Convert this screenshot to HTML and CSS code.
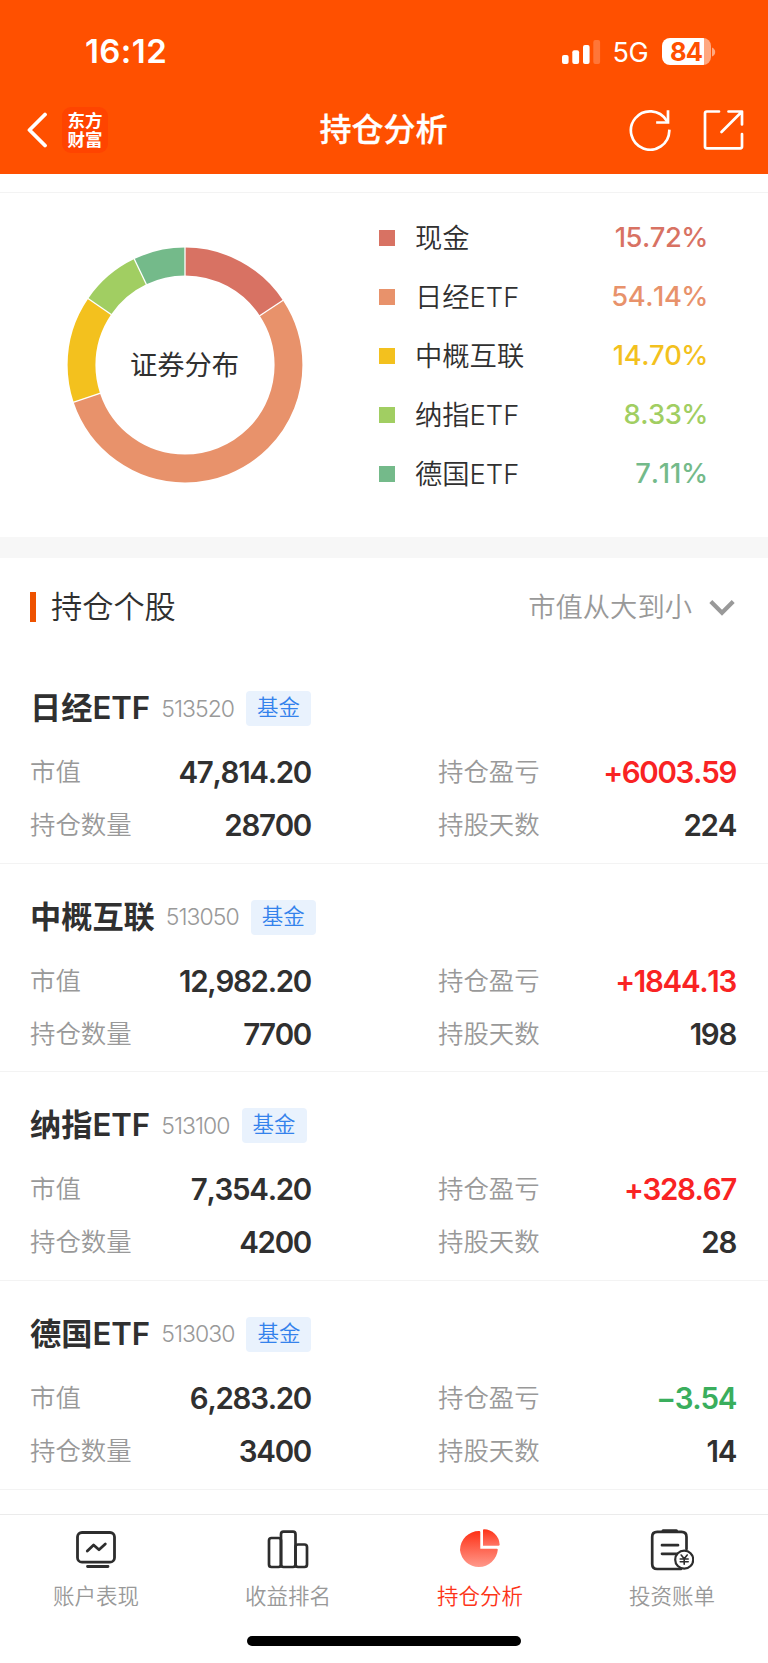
FILE: index.html
```html
<!DOCTYPE html>
<html lang="zh-CN">
<head>
<meta charset="utf-8">
<title>持仓分析</title>
<link rel="stylesheet" href="styles.css">
</head>
<body>
<div class="app">
  <header class="header">
    <div class="status">
      <span class="time">16:12</span>
      <div class="status-right">
        <svg class="signal" width="39" height="25" viewBox="0 0 39 25" fill="#fff">
          <rect x="0" y="15" width="6.6" height="9" rx="2"/>
          <rect x="10.3" y="10.3" width="6.8" height="13.7" rx="2"/>
          <rect x="21" y="5" width="6.6" height="19" rx="2"/>
          <rect x="31.3" y="0" width="6.8" height="24" rx="2" opacity=".22"/>
        </svg>
        <span class="network">5G</span>
        <div class="battery"><span class="battery-level">84</span></div>
        <svg class="battery-cap" width="4" height="10" viewBox="0 0 4 10"><path d="M0 0.5Q3.2 2 3.2 5T0 9.5Z" fill="#fff" opacity=".5"/></svg>
      </div>
    </div>
    <nav class="nav">
      <div class="nav-left">
        <svg width="22" height="36" viewBox="0 0 22 36" fill="none" stroke="#fff" stroke-width="3.8" stroke-linecap="round" stroke-linejoin="round"><path d="M19 2.500L3.500 18L19 33.500"/></svg>
        <div class="logo"><span>东方</span><span>财富</span></div>
      </div>
      <h1 class="nav-title">持仓分析</h1>
      <div class="nav-right">
        <svg width="42" height="42" viewBox="0 0 42 42" fill="none" stroke="#fff" stroke-width="2.700" stroke-linecap="square"><path d="M40.300 22A19.200 19.200 0 1 1 37.500 11.500"/><path d="M39 2.500V13.500H28.500"/></svg>
        <svg width="42" height="42" viewBox="0 0 42 42" fill="none" stroke="#fff" stroke-width="2.700" stroke-linecap="round" stroke-linejoin="round"><path d="M16 2.500H3.800Q2 2.500 2 4.300V37.500Q2 39.300 3.800 39.300H37.200Q39 39.300 39 37.500V25M25.500 2.500H39V15.500M38.500 3L18.500 23"/></svg>
      </div>
    </nav>
  </header>

  <section class="overview">
    <div class="chart">
      <svg width="236" height="236" viewBox="-118 -118 236 236">
        <g transform="rotate(-90)" fill="none" stroke-width="27.800">
          <circle r="103.500" stroke="#d87263" pathLength="100" stroke-dasharray="15.720 84.280" stroke-dashoffset="0"/>
          <circle r="103.500" stroke="#e8926b" pathLength="100" stroke-dasharray="54.140 45.860" stroke-dashoffset="-15.720"/>
          <circle r="103.500" stroke="#f3c11e" pathLength="100" stroke-dasharray="14.700 85.300" stroke-dashoffset="-69.860"/>
          <circle r="103.500" stroke="#a1ce62" pathLength="100" stroke-dasharray="8.330 91.670" stroke-dashoffset="-84.560"/>
          <circle r="103.500" stroke="#74ba8a" pathLength="100" stroke-dasharray="7.110 92.890" stroke-dashoffset="-92.890"/>
        </g>
        <g stroke="#fff" stroke-width="1.300">
          <path d="M0 -89V-118"/>
          <path d="M0 -89V-118" transform="rotate(56.590)"/>
          <path d="M0 -89V-118" transform="rotate(251.500)"/>
          <path d="M0 -89V-118" transform="rotate(304.420)"/>
          <path d="M0 -89V-118" transform="rotate(334.400)"/>
        </g>
      </svg>
      <span class="chart-label">证券分布</span>
    </div>
    <ul class="legend">
      <li class="cash"><i></i><span>现金</span><b>15.72%</b></li>
      <li class="nikkei"><i></i><span>日经ETF</span><b>54.14%</b></li>
      <li class="china"><i></i><span>中概互联</span><b>14.70%</b></li>
      <li class="nasdaq"><i></i><span>纳指ETF</span><b>8.33%</b></li>
      <li class="germany"><i></i><span>德国ETF</span><b>7.11%</b></li>
    </ul>
  </section>

  <section class="holdings">
    <div class="section-head">
      <h2><span>持仓个股</span></h2>
      <div class="sort"><span>市值从大到小</span>
        <svg width="26" height="18" viewBox="0 0 26 18" fill="none" stroke="#999" stroke-width="4.200"><path d="M1.800 2.500L13 13.700L24.200 2.500"/></svg>
      </div>
    </div>

    <article class="stock">
      <div class="stock-head"><h3>日经ETF</h3><span class="code">513520</span><span class="tag">基金</span></div>
      <dl><dt>市值</dt><dd>47,814.20</dd><dt>持仓盈亏</dt><dd class="up">+6003.59</dd>
      <dt>持仓数量</dt><dd>28700</dd><dt>持股天数</dt><dd>224</dd></dl>
    </article>
    <article class="stock">
      <div class="stock-head"><h3>中概互联</h3><span class="code">513050</span><span class="tag">基金</span></div>
      <dl><dt>市值</dt><dd>12,982.20</dd><dt>持仓盈亏</dt><dd class="up">+1844.13</dd>
      <dt>持仓数量</dt><dd>7700</dd><dt>持股天数</dt><dd>198</dd></dl>
    </article>
    <article class="stock">
      <div class="stock-head"><h3>纳指ETF</h3><span class="code">513100</span><span class="tag">基金</span></div>
      <dl><dt>市值</dt><dd>7,354.20</dd><dt>持仓盈亏</dt><dd class="up">+328.67</dd>
      <dt>持仓数量</dt><dd>4200</dd><dt>持股天数</dt><dd>28</dd></dl>
    </article>
    <article class="stock">
      <div class="stock-head"><h3>德国ETF</h3><span class="code">513030</span><span class="tag">基金</span></div>
      <dl><dt>市值</dt><dd>6,283.20</dd><dt>持仓盈亏</dt><dd class="down">−3.54</dd>
      <dt>持仓数量</dt><dd>3400</dd><dt>持股天数</dt><dd>14</dd></dl>
    </article>
  </section>

  <footer class="tabbar">
    <div class="tabs">
      <a class="tab">
        <svg width="44" height="44" viewBox="0 0 44 44" fill="none" stroke="#2d2d2d" stroke-width="2.800" stroke-linecap="round" stroke-linejoin="round"><rect x="3.500" y="4.500" width="37" height="29.700" rx="4.500"/><path d="M13.300 23L19.600 17L25 21.700L31.300 16M13.500 38.500H34"/></svg>
        <span>账户表现</span>
      </a>
      <a class="tab">
        <svg width="44" height="44" viewBox="0 0 44 44" fill="none" stroke="#2d2d2d" stroke-width="2.700"><rect x="3" y="10" width="12" height="29" rx="2.500"/><rect x="15" y="3.700" width="14.500" height="35.300" rx="2.500"/><rect x="29.500" y="16.500" width="11.500" height="22.500" rx="2.500"/></svg>
        <span>收益排名</span>
      </a>
      <a class="tab active">
        <svg width="44" height="44" viewBox="0 0 44 44">
          <defs>
            <linearGradient id="pie" x1="0" y1="0" x2="0" y2="1"><stop offset="0" stop-color="#fe3116"/><stop offset="1" stop-color="#ff998b"/></linearGradient>
            <linearGradient id="slice" x1="0" y1="0" x2="0" y2="1"><stop offset="0" stop-color="#fe3116"/><stop offset="1" stop-color="#ff7565"/></linearGradient>
          </defs>
          <path d="M21.200 3Q22.300 3 22.300 4V20.800H38.800Q39.800 20.800 39.800 21.800A19 19 0 0 1 2 22A19 19 0 0 1 21.200 3Z" fill="url(#pie)"/>
          <path d="M26 1.300A16 16 0 0 1 41.600 16.300Q41.600 17.800 40.500 17.800H25V2.300Q25 1.300 26 1.300Z" fill="url(#slice)"/>
        </svg>
        <span>持仓分析</span>
      </a>
      <a class="tab">
        <svg width="44" height="44" viewBox="0 0 44 44" fill="none" stroke="#2d2d2d" stroke-width="2.700" stroke-linecap="round" stroke-linejoin="round"><path d="M36.500 21V8.900Q36.500 3.900 31.500 3.900H7.200Q2.200 3.900 2.200 8.900V36Q2.200 41 7.200 41H31"/><path d="M13 2.700H26.500" stroke-width="3"/><path d="M12 17.200H28M12 25.800H27"/><circle cx="34.200" cy="31.700" r="9" fill="#fff" stroke-width="2.200"/><path d="M31.200 27L34.200 30.800L37.200 27M34.200 31V36.300M30.200 31H38.200M30.200 33.700H38.200" stroke-width="1.600"/></svg>
        <span>投资账单</span>
      </a>
    </div>
    <div class="home-indicator"></div>
  </footer>
</div>
</body>
</html>
```
FILE: styles.css
```css
* { box-sizing: border-box; margin: 0; padding: 0; }
body {
  width: 768px;
  background: #fff;
  color: #303030;
  font-family: Inter, "Noto Sans CJK SC", sans-serif;
}
svg { display: block; flex: none; }
.app { display: flex; flex-direction: column; height: 1663px; overflow: hidden; }

.header { height: 173.500px; background: #ff5000; color: #fff; flex: none; }
.status { height: 87px; padding: 37px 52px 0 85px; display: flex; justify-content: space-between; align-items: flex-start; }
.time { font-size: 33px; font-weight: 600; line-height: 29px; letter-spacing: 0.4px; }
.status-right { display: flex; align-items: center; height: 29px; }
.signal { margin-top: 1px; }
.network { font-size: 27px; line-height: 29px; margin-left: 11.500px; width: 49.500px; letter-spacing: -0.5px; margin-top: 1px; }
.battery { width: 49px; height: 27px; border-radius: 8px; background: linear-gradient(90deg, #fff 42px, #ffa880 42px); }
.battery-level { display: block; color: #ff5000; font-size: 25.500px; line-height: 27px; font-weight: 700; padding-left: 8px; letter-spacing: -0.8px; }
.battery-cap { margin-left: 1px; }
.nav { height: 86px; display: grid; grid-template-columns: 1fr auto 1fr; align-items: center; padding: 0 23px 0 26px; }
.nav-left { display: flex; align-items: center; gap: 14px; }
.logo { width: 46px; height: 46px; border-radius: 9px; background: #ff4400; display: flex; flex-direction: column; align-items: center; justify-content: center; font-size: 17.500px; font-weight: 700; line-height: 19px; }
.nav-title { font-size: 32px; line-height: 46px; font-weight: 500; margin-right: 4px; -webkit-text-stroke: 0.3px #fff; }
.nav-right { display: flex; justify-content: flex-end; gap: 32px; }

.overview { height: 366px; flex: none; margin-top: 18.500px; border-top: 1px solid #f3f3f3; border-bottom: 21px solid #f7f7f7; display: flex; }
.chart { width: 236px; height: 236px; margin: 54px 76px 0 67px; display: grid; place-items: center; }
.chart > * { grid-area: 1 / 1; }
.chart-label { font-size: 27.300px; padding-bottom: 5px; margin-right: 1px; }
.legend { list-style: none; flex: 1; padding: 15px 60px 0 0; }
.legend li { height: 59.100px; display: flex; align-items: center; font-size: 27.300px; }
.legend i { width: 16px; height: 16px; background: currentColor; }
.legend span { color: #303030; margin-left: 20px; flex: 1; font-weight: 350; padding-bottom: 3px; }
.legend b { font-weight: 540; font-kerning: none; letter-spacing: -0.45px; }
.legend .germany b { letter-spacing: -0.2px; }
.cash { color: #d87263; }
.nikkei { color: #e8926b; }
.china { color: #f3c11e; }
.nasdaq { color: #a1ce62; }
.germany { color: #74ba8a; }

.holdings { flex: 1; min-height: 0; }
.section-head { height: 97px; padding: 0 33px 0 30px; display: flex; justify-content: space-between; }
.section-head h2 { height: 98px; display: flex; align-items: center; gap: 15px; font-size: 31.200px; font-weight: 350; }
.section-head h2::before { content: ""; width: 6px; height: 30px; background: #ee5200; }
.section-head span { padding-bottom: 4px; }
.section-head h2 span { padding-bottom: 6px; }
.sort { height: 98px; display: flex; align-items: center; gap: 17px; color: #999; font-size: 27.300px; font-weight: 350; }
.sort svg { margin-top: 1px; }

.stock { height: 208.670px; padding: 36px 32px 0 30px; border-bottom: 1px solid #f3f3f3; }
.stock-head { height: 35px; display: flex; align-items: center; }
.stock-head h3 { font-size: 31.200px; font-weight: 600; line-height: 35px; }
.code { color: #999; font-size: 23px; font-weight: 300; margin-left: 11px; letter-spacing: -0.95px; }
.tag { width: 65px; height: 35px; margin-left: 12px; border-radius: 4px; background: #e9f2fd; color: #3482ec; font-size: 21.500px; font-weight: 350; line-height: 33px; text-align: center; }
.stock dl { display: grid; grid-template-columns: 127px 154px 127px 1fr; grid-auto-rows: 53px; align-items: center; padding-top: 19.500px; }
.stock dt { color: #999; font-size: 25.400px; font-weight: 350; line-height: 52px; white-space: nowrap; }
.stock dt:nth-of-type(even) { padding-left: 127px; margin-right: -127px; }
.stock dd { font-size: 29.500px; line-height: 54px; font-weight: 570; text-align: right; letter-spacing: -1.300px; font-kerning: none; }
.up { color: #f92323; }
.down { color: #3aae5d; }

.tabbar { height: 149px; flex: none; background: #fff; border-top: 1px solid #ebebeb; display: flex; flex-direction: column; align-items: center; }
.tabs { width: 768px; display: grid; grid-template-columns: repeat(4, 1fr); height: 121px; }
.tab { display: flex; flex-direction: column; align-items: center; padding-top: 13px; color: #999; font-size: 21.500px; font-weight: 350; line-height: 32px; gap: 8px; }
.tab.active { color: #fd3418; }
.home-indicator { width: 274px; height: 10px; border-radius: 5px; background: #000; }
```
